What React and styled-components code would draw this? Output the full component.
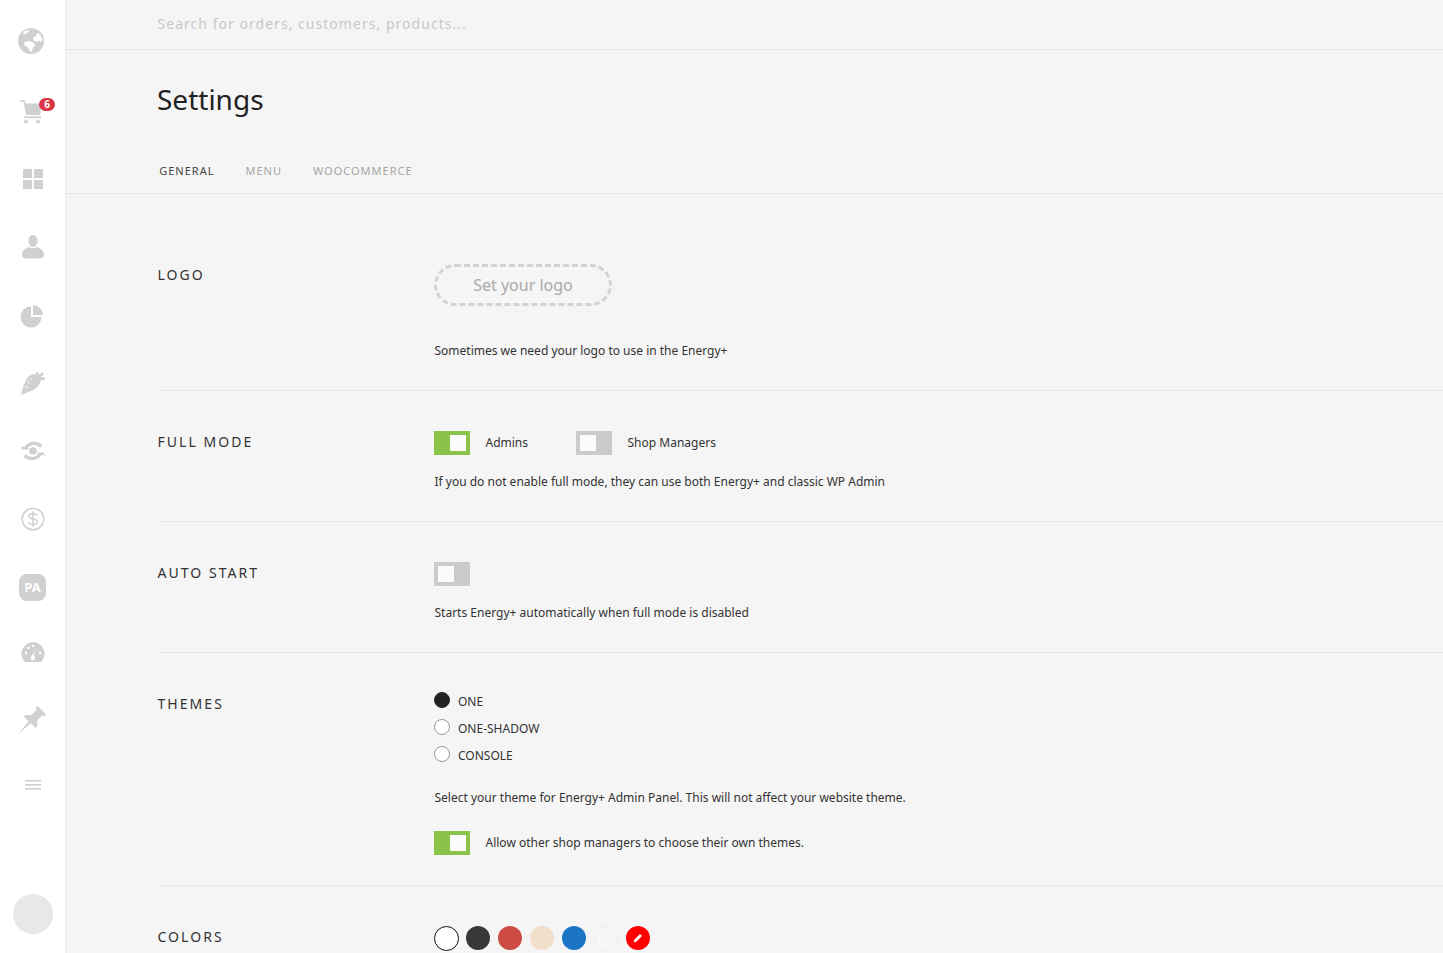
import React from 'react';
import styled, { createGlobalStyle } from 'styled-components';

const GlobalStyle = createGlobalStyle`
  html, body {
    margin: 0;
    padding: 0;
    height: 100%;
    overflow: hidden;
    background: #f5f5f5;
    font-family: 'Noto Sans', 'Open Sans', sans-serif;
    color: #222;
  }
`;

const Page = styled.div`
  display: flex;
  height: 953px;
  overflow: hidden;
`;

const Sidebar = styled.nav`
  flex: 0 0 65px;
  background: #fff;
  box-shadow: 1px 0 1px #eee;
  display: flex;
  flex-direction: column;
  align-items: center;
  padding-top: 7px;
  box-sizing: border-box;
  color: #d0d0d0;
`;

const NavItem = styled.div`
  position: relative;
  width: 65px;
  height: ${(p) => p.$h || 68}px;
  display: flex;
  align-items: center;
  justify-content: center;
  padding-right: ${(p) => p.$nudge || 0}px;
  box-sizing: border-box;
`;

const Badge = styled.span`
  position: absolute;
  top: 23px;
  left: 39px;
  width: 16px;
  height: 13px;
  border-radius: 8px;
  background: #dc3545;
  color: #fff;
  font-size: 10px;
  font-weight: 700;
  line-height: 13px;
  text-align: center;
`;

const PaBadge = styled.span`
  width: 27px;
  height: 27px;
  border-radius: 8px;
  background: #d0d0d0;
  color: #fff;
  font-size: 13px;
  font-weight: 700;
  line-height: 27px;
  text-align: center;
`;

const Avatar = styled.div`
  width: 40px;
  height: 40px;
  border-radius: 50%;
  background: #e8e8e8;
  margin-top: auto;
  margin-bottom: 19px;
`;

const Main = styled.main`
  flex: 1;
  min-width: 0;
`;

const SearchBar = styled.div`
  height: 47px;
  padding: 0 0 2px 92.5px;
  border-bottom: 1px solid #e6e6e6;
  display: flex;
  align-items: center;
  font-size: 14px;
  letter-spacing: 1.03px;
  color: #c8c8c8;
`;

const Title = styled.h1`
  margin: 0;
  padding: 29px 0 0 92px;
  font-size: 28px;
  font-weight: 400;
  line-height: 40px;
  color: #222;
`;

const Tabs = styled.div`
  display: flex;
  gap: 31px;
  height: 46px;
  margin-top: 25px;
  padding: 3px 0 0 94.25px;
  border-bottom: 1px solid #e6e6e6;
  align-items: center;
`;

const Tab = styled.span`
  font-size: 11px;
  letter-spacing: 1px;
  text-transform: uppercase;
  color: ${(p) => (p.$active ? '#444' : '#a5a5a5')};
`;

const Section = styled.section`
  display: grid;
  grid-template-columns: 276.5px 1fr;
  margin-left: 92.5px;
  padding: ${(p) => p.$top || 40}px 0 ${(p) => p.$bottom || 30}px;
  border-bottom: ${(p) => (p.$last ? 'none' : '1px solid #e6e6e6')};
`;

const Label = styled.div`
  font-size: 14px;
  letter-spacing: 2.05px;
  line-height: 22px;
  color: #333;
  text-transform: uppercase;
`;

const LogoButton = styled.div`
  width: 178px;
  height: 42px;
  box-sizing: border-box;
  border: 3px dashed #d2d2d2;
  border-radius: 21px;
  display: flex;
  align-items: center;
  justify-content: center;
  font-size: 16px;
  color: #aaa;
`;

const Hint = styled.p`
  margin: ${(p) => p.$top || 0}px 0 0;
  padding-left: 0.5px;
  font-size: 12px;
  line-height: 18px;
  color: #333;
`;

const ToggleRow = styled.div`
  display: flex;
  align-items: center;
  height: 24px;
  margin-top: ${(p) => p.$top || 0}px;
`;

const ToggleBox = styled.span`
  flex: none;
  width: 36px;
  height: 24px;
  box-sizing: border-box;
  padding: 4px;
  display: flex;
  justify-content: ${(p) => (p.$on ? 'flex-end' : 'flex-start')};
  background: ${(p) => (p.$on ? '#8bc34a' : '#cbcbcb')};
`;

const Knob = styled.span`
  width: 16px;
  height: 16px;
  background: #fbfbfb;
`;

const ToggleText = styled.span`
  margin-left: 15.5px;
  margin-right: ${(p) => p.$gap || 0}px;
  padding-bottom: 2px;
  font-size: 12px;
  color: #333;
`;

const RadioList = styled.div`
  display: flex;
  flex-direction: column;
  gap: 9px;
  margin-top: -1px;
`;

const RadioRow = styled.div`
  display: flex;
  align-items: center;
  height: 18px;
  font-size: 12px;
  color: #333;
`;

const RadioDot = styled.span`
  width: 16px;
  height: 16px;
  box-sizing: border-box;
  margin-right: 8px;
  margin-top: -2px;
  border-radius: 50%;
  border: 1px solid ${(p) => (p.$on ? '#222' : '#999')};
  background: ${(p) => (p.$on ? '#222' : '#fff')};
`;

const Swatches = styled.div`
  display: flex;
  gap: 8px;
  height: 24px;
`;

const Swatch = styled.span`
  width: 24px;
  height: 24px;
  box-sizing: border-box;
  border-radius: 50%;
  background: ${(p) => p.$color};
  border: ${(p) => p.$border || 'none'};
  display: flex;
  align-items: center;
  justify-content: center;
`;

const SelectedSwatch = styled(Swatch)`
  width: 25px;
  height: 25px;
  margin-right: -1px;
`;

const Globe = () => (
  <svg width="26" height="26" viewBox="0 0 26 26">
    <circle cx="13" cy="13" r="13" fill="currentColor" />
    <path d="M15 9.500l3-1.500 1-3 3 1.500 2.500 5-1 2.500-3-1-2 1-3-1.500zM6 14l5-1 4.500 1.500 2 3-2.500 2-1 4.500-2-.5-2-4-3.500-2zM6 3.500l4-1.500 1 1.500-2.500 2L5 7z" fill="#fff" />
  </svg>
);

const Cart = () => (
  <svg width="26" height="28" viewBox="0 0 26 28" fill="currentColor">
    <path d="M.5 4h5l1.200 3.500H22l-.8 11.500H7.200L4.300 5.600H.5z" />
    <rect x="5" y="20.400" width="17" height="1.800" />
    <circle cx="7" cy="25.500" r="2" />
    <circle cx="19" cy="25.500" r="2" />
  </svg>
);

const Grid = () => (
  <svg width="20" height="20" viewBox="0 0 20 20" fill="currentColor">
    <rect x="0" y="0" width="9" height="9" />
    <rect x="11" y="0" width="9" height="9" />
    <rect x="0" y="11" width="9" height="9" />
    <rect x="11" y="11" width="9" height="9" />
  </svg>
);

const User = () => (
  <svg width="22" height="24" viewBox="0 0 22 24" fill="currentColor">
    <ellipse cx="11" cy="6" rx="4.600" ry="6" />
    <path d="M0 20c0-5 4-7 7-8 2 1.400 6 1.400 8 0 3 1 7 3 7 8 0 2.500-2 3.500-4 3.500H4c-2 0-4-1-4-3.500z" />
  </svg>
);

const Pie = () => (
  <svg width="24" height="24" viewBox="0 0 24 24" fill="currentColor">
    <path d="M11 2.500V13h10.500A10.500 10.500 0 1 1 11 2.500z" />
    <path d="M13 1a10 10 0 0 1 10 10H13z" />
  </svg>
);

const Carrot = () => (
  <svg width="26" height="26" viewBox="0 0 26 26" fill="currentColor">
    <path d="M1.200 23.800C2 18 5 9 9 5c2.500-2.200 6-2.500 8.500-.5l2.300 3c1.500 2.500.8 4.500-1.300 7-2 2.500-4 4-6.500 5-3 1.300-7.500 3.300-10.800 4.300z" />
    <path d="M15.500 3.500L17 .5l2.500 3L23 1l.5 2.500-2.500 2.500 4.500.5-1 2.500-4 .5-2-3.500z" />
    <path d="M7 10l3 2.500M5 15l3 2.500M10.500 7.500l2 1.800" stroke="#fff" strokeWidth="1" fill="none" />
  </svg>
);

const Sync = () => (
  <svg width="26" height="22" viewBox="0 0 26 22" fill="currentColor">
    <circle cx="13" cy="11" r="3.800" />
    <path d="M.5 6.500L4.500 7C7.500 1.500 17.500-.5 22.500 5.500L20 7.800C16.500 4 10.500 4.300 7.800 8l1.400 1.500L2.500 9.500z" />
    <path d="M25.500 15.500L21.500 15C18.500 20.500 8.500 22.500 3.500 16.500L6 14.200C9.500 18 15.500 17.700 18.200 14l-1.400-1.500 6.700 0z" />
  </svg>
);

const Dollar = () => (
  <svg width="24" height="24" viewBox="0 0 24 24" fill="none" stroke="currentColor" strokeWidth="1.500">
    <circle cx="12" cy="12" r="10.800" />
    <path d="M16 8.500C15.500 7 14 6.500 12 6.500c-2.500 0-4 1-4 2.800 0 4 8.200 1.600 8.200 5.500 0 1.800-1.700 2.800-4.200 2.800-2.200 0-3.800-.8-4.300-2.400M12 4.500v15" />
  </svg>
);

const Gauge = () => (
  <svg width="24" height="20" viewBox="0 0 24 20" fill="currentColor">
    <path d="M4 20A11.500 11.500 0 1 1 20 20z" />
    <path d="M15.500 7L12.500 13a2.500 2.500 0 1 1-2.500 5l-.5-2.500z" fill="#fff" />
    <circle cx="5" cy="11" r="1.300" fill="#fff" />
    <circle cx="7.500" cy="6" r="1.300" fill="#fff" />
    <circle cx="12" cy="4" r="1.300" fill="#fff" />
    <circle cx="19" cy="11" r="1.300" fill="#fff" />
  </svg>
);

const Pin = () => (
  <svg width="28" height="28" viewBox="0 0 28 28" fill="currentColor">
    <path
      transform="rotate(45 14 14)"
      d="M8 0h12v2.500l-2 1v7l4 4v2.500H15.500L14 33l-1.500-15.500H6V15l4-4V3.500l-2-1z"
    />
  </svg>
);

const Menu = () => (
  <svg width="16" height="10" viewBox="0 0 16 10" fill="currentColor">
    <rect y="0" width="16" height="1.600" />
    <rect y="4" width="16" height="1.600" />
    <rect y="8" width="16" height="1.600" />
  </svg>
);

const Pencil = () => (
  <svg width="10" height="10" viewBox="0 0 10 10" fill="#fff">
    <path d="M0.500 9.500l1-3L7 1l2 2-5.500 5.500z" />
  </svg>
);

const Toggle = ({ on }) => (
  <ToggleBox $on={on}>
    <Knob />
  </ToggleBox>
);

const App = () => (
  <Page>
    <GlobalStyle />
    <Sidebar>
      <NavItem $nudge={3}><Globe /></NavItem>
      <NavItem $h={69} $nudge={1}><Cart /><Badge>6</Badge></NavItem>
      <NavItem $h={69}><Grid /></NavItem>
      <NavItem><User /></NavItem>
      <NavItem $h={69} $nudge={1}><Pie /></NavItem>
      <NavItem $h={67}><Carrot /></NavItem>
      <NavItem><Sync /></NavItem>
      <NavItem><Dollar /></NavItem>
      <NavItem><PaBadge>PA</PaBadge></NavItem>
      <NavItem $h={62}><Gauge /></NavItem>
      <NavItem $h={73} $nudge={1}><Pin /></NavItem>
      <NavItem $h={58}><Menu /></NavItem>
      <Avatar />
    </Sidebar>
    <Main>
      <SearchBar>Search for orders, customers, products...</SearchBar>
      <Title>Settings</Title>
      <Tabs>
        <Tab $active>General</Tab>
        <Tab>Menu</Tab>
        <Tab>WooCommerce</Tab>
      </Tabs>
      <Section $top={70} $bottom={30}>
        <Label>Logo</Label>
        <div>
          <LogoButton>Set your logo</LogoButton>
          <Hint $top={36}>Sometimes we need your logo to use in the Energy+</Hint>
        </div>
      </Section>
      <Section>
        <Label>Full mode</Label>
        <div>
          <ToggleRow>
            <Toggle on />
            <ToggleText $gap={48}>Admins</ToggleText>
            <Toggle />
            <ToggleText>Shop Managers</ToggleText>
          </ToggleRow>
          <Hint $top={18}>If you do not enable full mode, they can use both Energy+ and classic WP Admin</Hint>
        </div>
      </Section>
      <Section>
        <Label>Auto start</Label>
        <div>
          <ToggleRow>
            <Toggle />
          </ToggleRow>
          <Hint $top={18}>Starts Energy+ automatically when full mode is disabled</Hint>
        </div>
      </Section>
      <Section>
        <Label>Themes</Label>
        <div>
          <RadioList>
            <RadioRow><RadioDot $on />ONE</RadioRow>
            <RadioRow><RadioDot />ONE-SHADOW</RadioRow>
            <RadioRow><RadioDot />CONSOLE</RadioRow>
          </RadioList>
          <Hint $top={25}>Select your theme for Energy+ Admin Panel. This will not affect your website theme.</Hint>
          <ToggleRow $top={24}>
            <Toggle on />
            <ToggleText>Allow other shop managers to choose their own themes.</ToggleText>
          </ToggleRow>
        </div>
      </Section>
      <Section $last>
        <Label>Colors</Label>
        <Swatches>
          <SelectedSwatch $color="#fff" $border="1.500px solid #111" />
          <Swatch $color="#383838" />
          <Swatch $color="#cc4b43" />
          <Swatch $color="#f1dfcc" />
          <Swatch $color="#1b75c4" />
          <Swatch $color="#f6f6f6" $border="1px solid #eee" />
          <Swatch $color="#ff0000"><Pencil /></Swatch>
        </Swatches>
      </Section>
    </Main>
  </Page>
);

export default App;
